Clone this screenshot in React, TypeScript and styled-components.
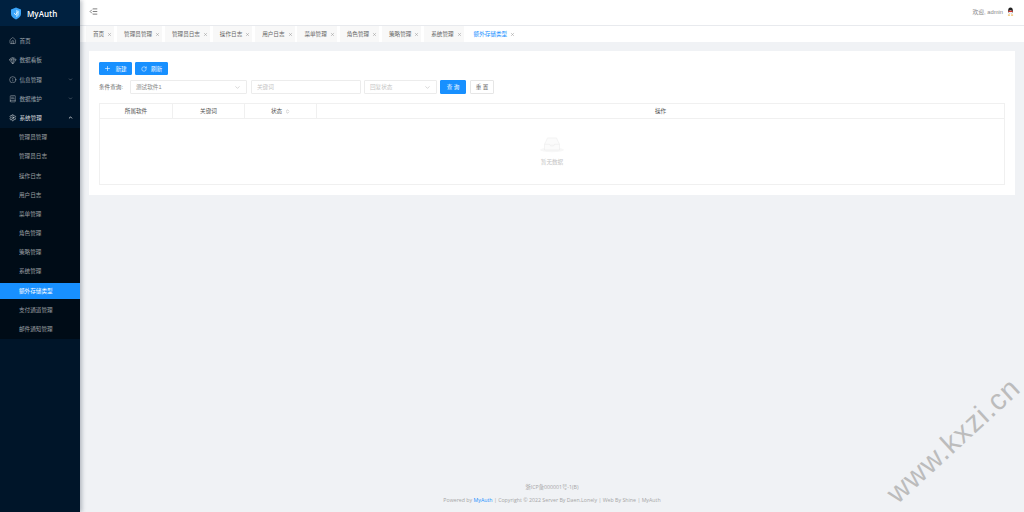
import { createGlobalStyle, styled } from "styled-components";
import { Home, Gem, Info, BookText, Settings, ChevronDown, ChevronUp, Plus, RotateCw, X, ChevronsUpDown, IndentDecrease } from "lucide-react";

const GlobalStyle = createGlobalStyle`
  html, body {
    margin: 0;
    padding: 0;
    width: 1024px;
    height: 512px;
    overflow: hidden;
    background: #f0f2f5;
    font-family: "Liberation Sans", "Noto Sans CJK SC", sans-serif;
  }
  * { box-sizing: border-box; }
`;

const tabs = ["首页", "管理员管理", "管理员日志", "操作日志", "用户日志", "菜单管理", "角色管理", "策略管理", "系统管理", "额外存储类型"];
const topMenu = [
  { label: "首页", icon: Home },
  { label: "数据看板", icon: Gem },
  { label: "信息管理", icon: Info, arrow: "down" },
  { label: "数据维护", icon: BookText, arrow: "down" },
  { label: "系统管理", icon: Settings, arrow: "up", open: true },
];
const subMenu = ["管理员管理", "管理员日志", "操作日志", "用户日志", "菜单管理", "角色管理", "策略管理", "系统管理", "额外存储类型", "支付通道管理", "邮件通知管理"];
const columns = [
  { title: "所属软件", width: 73 },
  { title: "关键词", width: 72 },
  { title: "状态", width: 72, sort: true },
  { title: "操作" },
];

const Page = styled.div`
  display: flex;
  width: 1024px;
  height: 512px;
  position: relative;
  overflow: hidden;
`;
const Sidebar = styled.aside`
  width: 80px;
  flex: none;
  background: #001529;
  box-shadow: 2px 0 4px rgba(0, 21, 41, 0.25);
  z-index: 2;
`;
const Logo = styled.div`
  height: 26px;
  background: #002140;
  display: flex;
  align-items: center;
  gap: 6px;
  padding-left: 11px;
  color: #fff;
  font-family: "Open Sans", "Liberation Sans", sans-serif;
  font-size: 8px;
  font-weight: 600;
`;
const TopMenu = styled.div`
  padding-top: 5.6px;
`;
const MenuItem = styled.div<{ $open?: boolean }>`
  height: 19.2px;
  display: flex;
  align-items: center;
  padding-left: 9px;
  padding-right: 7px;
  gap: 3px;
  color: ${(p) => (p.$open ? "rgba(255,255,255,0.85)" : "rgba(255,255,255,0.6)")};
  font-size: 5.6px;
  svg { flex: none; }
`;
const Arrow = styled.span`
  margin-left: auto;
  display: flex;
`;
const SubMenu = styled.div`
  display: flex;
  flex-direction: column;
  background: #000c17;
`;
const SubItem = styled.div<{ $active?: boolean }>`
  height: 16px;
  margin: 1.6px 0;
  display: flex;
  align-items: center;
  padding-left: 19px;
  font-size: 5.6px;
  color: ${(p) => (p.$active ? "#fff" : "rgba(255,255,255,0.6)")};
  background: ${(p) => (p.$active ? "#1890ff" : "transparent")};
`;
const Main = styled.main`
  flex: 1;
  min-width: 0;
  display: flex;
  flex-direction: column;
`;
const Header = styled.header`
  height: 26px;
  flex: none;
  background: #fff;
  border-bottom: 1px solid #e8eaee;
  display: flex;
  align-items: center;
  justify-content: space-between;
  padding: 0 10px 2px 9px;
  color: #555;
`;
const User = styled.div`
  display: flex;
  align-items: center;
  gap: 4px;
  font-size: 5.8px;
  color: #888;
`;
const TabBar = styled.nav`
  height: 16px;
  flex: none;
  background: #fff;
  display: flex;
  gap: 2.9px;
  padding-left: 6px;
`;
const Tab = styled.div<{ $active?: boolean }>`
  display: flex;
  align-items: center;
  gap: 3px;
  padding: 0 2px 0 7px;
  font-size: 5.6px;
  color: ${(p) => (p.$active ? "#1890ff" : "#666")};
  background: ${(p) => (p.$active ? "#fff" : "#f8f8f8")};
  svg { color: #888; }
`;
const Content = styled.div`
  flex: 1;
  padding: 9px 9px 0;
  display: flex;
  flex-direction: column;
`;
const Card = styled.section`
  background: #fff;
  height: 144px;
  padding: 11px 10px;
`;
const Toolbar = styled.div`
  display: flex;
  gap: 3px;
  height: 13px;
`;
const Button = styled.button<{ $ghost?: boolean; $w: number }>`
  width: ${(p) => p.$w}px;
  height: 100%;
  display: flex;
  align-items: center;
  justify-content: center;
  gap: 4px;
  padding: 0;
  font-family: inherit;
  font-size: 5.6px;
  border-radius: 1px;
  color: ${(p) => (p.$ghost ? "#666" : "#fff")};
  background: ${(p) => (p.$ghost ? "#fff" : "#1890ff")};
  border: 1px solid ${(p) => (p.$ghost ? "#e6e6e6" : "#1890ff")};
`;
const ResetButton = styled(Button)`
  margin-left: 4px;
`;
const FilterRow = styled.div`
  display: flex;
  align-items: center;
  height: 14px;
  margin-top: 5px;
  font-size: 5.6px;
  color: #666;
`;
const FilterLabel = styled.span`
  width: 31px;
`;
const Field = styled.div<{ $w: number; $gap: number; $muted?: boolean }>`
  width: ${(p) => p.$w}px;
  height: 100%;
  margin-right: ${(p) => p.$gap}px;
  border: 1px solid #ececec;
  border-radius: 1px;
  display: flex;
  align-items: center;
  justify-content: space-between;
  padding: 0 5px;
  color: ${(p) => (p.$muted ? "#c4c4c4" : "#888")};
  svg { color: #bbb; }
`;
const Table = styled.div`
  margin-top: 9px;
  height: 82px;
  border: 1px solid #f0f0f0;
`;
const HeadRow = styled.div`
  height: 15px;
  display: flex;
  border-bottom: 1px solid #f0f0f0;
`;
const HeadCell = styled.div<{ $w?: number }>`
  ${(p) => (p.$w ? `width: ${p.$w}px;` : "flex: 1;")}
  display: flex;
  align-items: center;
  justify-content: center;
  gap: 3px;
  font-size: 5.6px;
  color: #555;
  border-right: 1px solid #f0f0f0;
  &:last-child { border-right: none; }
  svg { color: #888; }
`;
const Empty = styled.div`
  display: flex;
  flex-direction: column;
  align-items: center;
  padding-top: 17px;
  gap: 5px;
  font-size: 5.6px;
  color: #c4c4c4;
`;
const Footer = styled.footer`
  margin-top: auto;
  padding-bottom: 8px;
  display: flex;
  flex-direction: column;
  align-items: center;
  gap: 5px;
  font-family: "Open Sans", "Liberation Sans", "Noto Sans CJK SC", sans-serif;
  font-size: 5.25px;
  color: #a6a6a6;
  a { color: #1890ff; text-decoration: none; }
`;
const Watermark = styled.div`
  position: absolute;
  left: 869px;
  top: 426px;
  font-family: "Liberation Sans", sans-serif;
  font-size: 29px;
  line-height: 1;
  letter-spacing: 1px;
  color: #bcbcbc;
  transform: rotate(-42.5deg);
  transform-origin: center;
  pointer-events: none;
  white-space: nowrap;
  z-index: 3;
`;

const App = () => (
  <Page>
    <GlobalStyle />
    <Sidebar>
      <Logo>
        <svg width="10" height="13" viewBox="0 0 22 26">
          <path d="M11 0 L22 4 V13 C22 20 16 24 11 26 C6 24 0 20 0 13 V4 Z" fill="#3aa4f8" />
          <path d="M11 5 L18 7.5 V13 C18 17.5 14.5 20 11 21.5 Z" fill="#8fd0fd" />
          <path d="M7 12 L10 16 L15 9" fill="none" stroke="#fff" strokeWidth="1.6" />
        </svg>
        MyAuth
      </Logo>
      <TopMenu>
        {topMenu.map((m) => (
          <MenuItem key={m.label} $open={m.open}>
            <m.icon size={7.5} strokeWidth={1.8} />
            <span>{m.label}</span>
            {m.arrow && <Arrow>{m.arrow === "down" ? <ChevronDown size={5} /> : <ChevronUp size={5} strokeWidth={3.5} color="#fff" />}</Arrow>}
          </MenuItem>
        ))}
      </TopMenu>
      <SubMenu>
        {subMenu.map((s) => (
          <SubItem key={s} $active={s === "额外存储类型"}>{s}</SubItem>
        ))}
      </SubMenu>
    </Sidebar>
    <Main>
      <Header>
        <IndentDecrease size={9} strokeWidth={2} />
        <User>
          <span>欢迎, admin</span>
          <svg width="7" height="9" viewBox="0 0 18 22">
            <ellipse cx="9" cy="9" rx="6" ry="8" fill="#222" />
            <ellipse cx="9" cy="13" rx="4.5" ry="5" fill="#f4f4f4" />
            <rect x="3.5" y="9" width="11" height="3" rx="1" fill="#d8322a" />
            <ellipse cx="5" cy="20" rx="3" ry="1.5" fill="#e8a020" />
            <ellipse cx="13" cy="20" rx="3" ry="1.5" fill="#e8a020" />
          </svg>
        </User>
      </Header>
      <TabBar>
        {tabs.map((t) => (
          <Tab key={t} $active={t === "额外存储类型"}>
            {t}
            <X size={5} />
          </Tab>
        ))}
      </TabBar>
      <Content>
        <Card>
          <Toolbar>
            <Button $w={33}><Plus size={7} />新建</Button>
            <Button $w={33}><RotateCw size={6} />刷新</Button>
          </Toolbar>
          <FilterRow>
            <FilterLabel>条件查询:</FilterLabel>
            <Field $w={117} $gap={4}>测试软件1<ChevronDown size={7} /></Field>
            <Field $w={110} $gap={3} $muted>关键词</Field>
            <Field $w={73} $gap={3} $muted>回复状态<ChevronDown size={7} /></Field>
            <Button $w={26}>查 询</Button>
            <ResetButton $w={24} $ghost>重 置</ResetButton>
          </FilterRow>
          <Table>
            <HeadRow>
              {columns.map((c) => (
                <HeadCell key={c.title} $w={c.width}>
                  {c.title}
                  {c.sort && <ChevronsUpDown size={5} />}
                </HeadCell>
              ))}
            </HeadRow>
            <Empty>
              <svg width="24" height="17" viewBox="0 0 64 41">
                <ellipse cx="32" cy="35" rx="32" ry="6" fill="#f7f7f7" />
                <path d="M12 20 L20 3 H44 L52 20 V35 H12 Z" fill="#fbfbfb" stroke="#ececec" strokeWidth="1.5" />
                <path d="M12 20 H25 C25 26 39 26 39 20 H52" fill="#f7f7f7" stroke="#ececec" strokeWidth="1.5" />
              </svg>
              暂无数据
            </Empty>
          </Table>
        </Card>
        <Footer>
          <span>浙ICP备000001号-1(B)</span>
          <span>Powered by <a>MyAuth</a> | Copyright © 2022 Server By Daen.Lonely | Web By Shine | MyAuth</span>
        </Footer>
      </Content>
    </Main>
    <Watermark>www.kxzi.cn</Watermark>
  </Page>
);

export default App;
